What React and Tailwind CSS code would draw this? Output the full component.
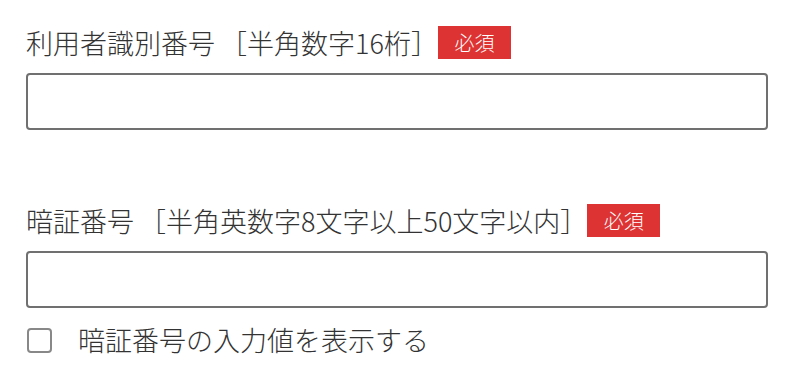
import React from 'react';

const font = { fontFamily: '"Noto Sans CJK JP", "Noto Sans", sans-serif' };

function Required() {
  return (
    <span className="inline-flex h-[33px] w-[73px] items-center justify-center bg-[#dd3333] text-[20px] font-light leading-none text-white">
      必須
    </span>
  );
}

function Field({ label, note, className = '' }) {
  return (
    <div className={className}>
      <div className="flex h-[33px] items-center text-[27px] font-light leading-[33px] text-[#333333]">
        <span>{label}</span>
        <span className="ml-[5px]">{note}</span>
        <Required />
      </div>
      <input
        type="text"
        className="mt-[14px] block h-[57px] w-[742px] rounded-[4px] border-2 border-[#707070] bg-white outline-none"
      />
    </div>
  );
}

export default function App() {
  return (
    <div className="min-h-[366px] w-[790px] bg-white pl-[26px] pt-[26px]" style={font}>
      <Field label="利用者識別番号" note="［半角数字16桁］" />
      <Field className="mt-[74px]" label="暗証番号" note="［半角英数字8文字以上50文字以内］" />
      <label className="mt-[20px] flex h-[25px] items-center text-[27px] font-light text-[#333333]">
        <span className="ml-[1px] h-[25px] w-[25px] rounded-[4px] border-2 border-[#888888] bg-white" />
        <span className="ml-[26px]">暗証番号の入力値を表示する</span>
      </label>
    </div>
  );
}
